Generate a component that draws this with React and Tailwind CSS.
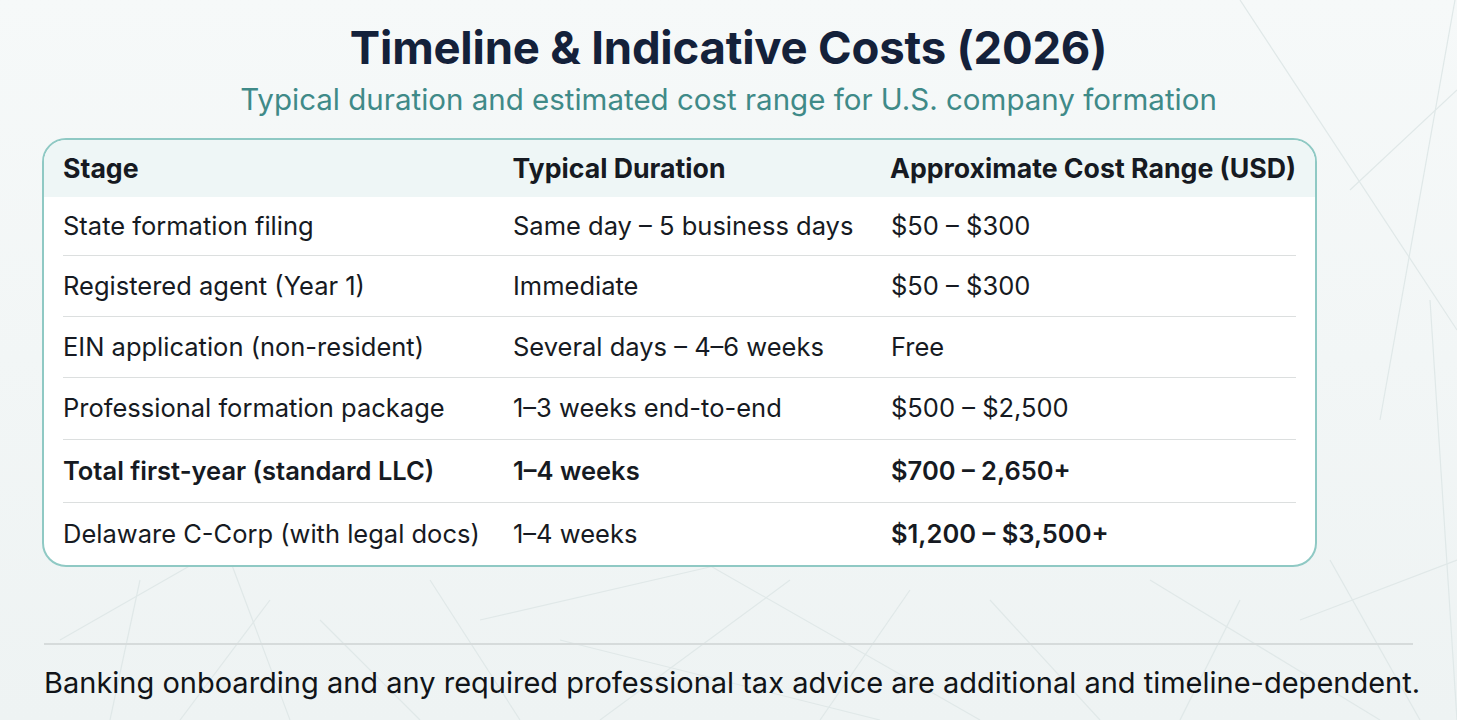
import React from "react";

const rows = [
    { stage: "State formation filing", duration: "Same day – 5 business days", cost: "$50 – $300", h: "h-[58px]" },
    { stage: "Registered agent (Year 1)", duration: "Immediate", cost: "$50 – $300", h: "h-[61px]" },
    { stage: "EIN application (non-resident)", duration: "Several days – 4–6 weeks", cost: "Free", h: "h-[61px]" },
    { stage: "Professional formation package", duration: "1–3 weeks end-to-end", cost: "$500 – $2,500", h: "h-[62px]" },
    { stage: "Total first-year (standard LLC)", duration: "1–4 weeks", cost: "$700 – 2,650+", bold: true, h: "h-[63px]" },
    { stage: "Delaware C-Corp (with legal docs)", duration: "1–4 weeks", cost: "$1,200 – $3,500+", boldCost: true, h: "h-[63px]" },
];

function Backdrop() {
    // faint geometric mesh behind everything
    const lines = [
        [1240, 0, 1457, 330], [1455, 0, 1380, 420], [1350, 190, 1457, 90],
        [1430, 300, 1457, 720], [1300, 620, 1457, 560], [1330, 560, 1420, 720],
        [230, 560, 290, 720], [180, 720, 270, 600], [140, 580, 110, 720],
        [430, 580, 520, 720], [480, 620, 740, 560], [600, 720, 790, 580],
        [560, 640, 880, 720], [820, 720, 910, 590], [990, 600, 1100, 720],
        [1150, 580, 1380, 720], [700, 560, 980, 720], [60, 640, 200, 560],
        [1180, 720, 1240, 600], [320, 620, 420, 720],
    ];
    return (
        <svg className="absolute inset-0 w-full h-full pointer-events-none" viewBox="0 0 1457 720" preserveAspectRatio="none">
            {lines.map(([x1, y1, x2, y2], i) => (
                <line key={i} x1={x1} y1={y1} x2={x2} y2={y2} stroke="#e0e8e8" strokeWidth="1.2" />
            ))}
        </svg>
    );
}

export default function App() {
    return (
        <div
            className="relative w-[1457px] h-[720px] overflow-hidden bg-gradient-to-b from-[#f6f9f9] to-[#eef3f3] text-[#161a22]"
            style={{ fontFamily: "Inter, 'Noto Sans', sans-serif" }}
        >
            <Backdrop />
            <div className="relative flex flex-col h-full">
                <div className="flex flex-col items-center pt-[21px]">
                    <h1 className="text-[45.5px] leading-[54px] font-bold text-[#14213a] tracking-[-0.2px]">
                        Timeline &amp; Indicative Costs (2026)
                    </h1>
                    <p className="mt-[6px] text-[29.5px] leading-[36px] text-[#3f8a88]">
                        Typical duration and estimated cost range for U.S. company formation
                    </p>
                </div>

                <div className="mt-[21px] ml-[42px] w-[1275px] h-[429px] rounded-[24px] border-2 border-[#8fc9c4] bg-white overflow-hidden">
                    <div className="flex items-center h-[57px] bg-[#eef6f6] px-[19px] text-[26.7px] font-bold text-[#161a22]">
                        <div className="w-[450px]">Stage</div>
                        <div className="w-[378px]">Typical Duration</div>
                        <div className="flex-1 whitespace-nowrap">Approximate Cost Range (USD)</div>
                    </div>
                    <div className="px-[19px]">
                        {rows.map((r, i) => (
                            <div
                                key={r.stage}
                                className={
                                    "flex items-center text-[25.5px] " + r.h + " " +
                                    (i > 0 ? "border-t border-[#dcdfdf] " : "") +
                                    (r.bold ? "font-semibold" : "")
                                }
                            >
                                <div className="w-[450px]">{r.stage}</div>
                                <div className="w-[378px]">{r.duration}</div>
                                <div className={"flex-1 " + (r.boldCost ? "font-semibold" : "")}>{r.cost}</div>
                            </div>
                        ))}
                    </div>
                </div>

                <div className="mt-[76px] mx-[44px] border-t-2 border-[#d6dbdb]" />
                <p className="mt-[20px] ml-[44px] text-[29px] leading-[36px] text-[#111418] whitespace-nowrap">
                    Banking onboarding and any required professional tax advice are additional and timeline-dependent.
                </p>
            </div>
        </div>
    );
}
